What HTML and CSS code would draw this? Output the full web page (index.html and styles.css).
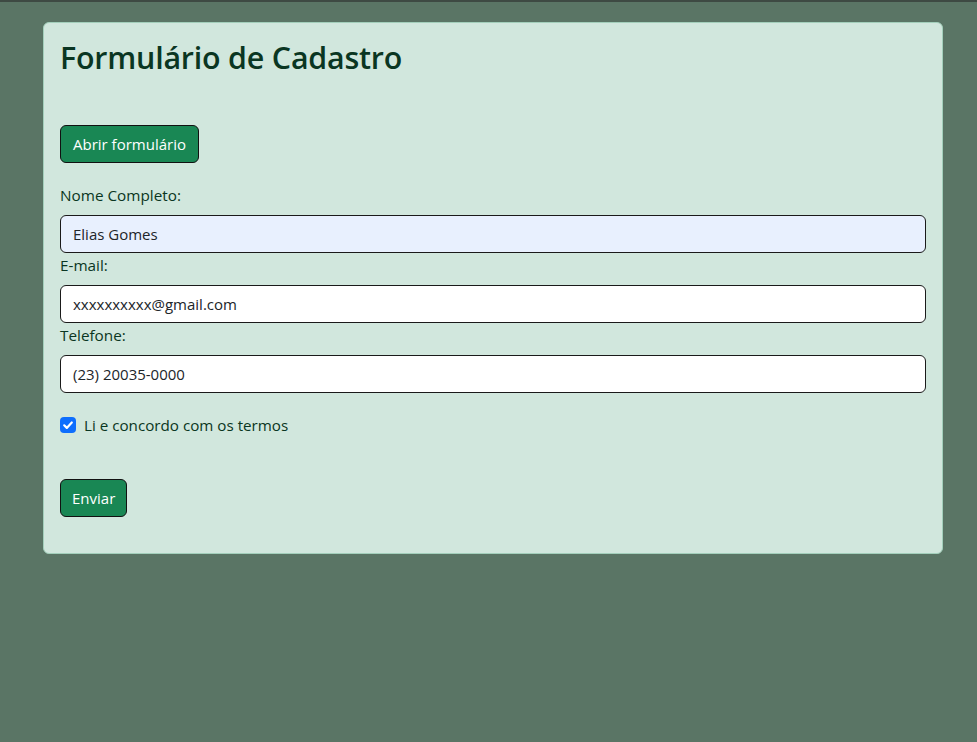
FILE: index.html
```html
<!DOCTYPE html>
<html lang="pt-BR">
<head>
<meta charset="utf-8">
<title>Formulário de Cadastro</title>
<link rel="stylesheet" href="styles.css">
</head>
<body>
<div class="topline"></div>
<main class="card">
  <h1 class="title">Formulário de Cadastro</h1>
  <button class="btn btn-open" type="button">Abrir formulário</button>
  <form class="form">
    <label class="label" for="nome">Nome Completo:</label>
    <input class="input input-autofill" id="nome" type="text" value="Elias Gomes">
    <label class="label" for="email">E-mail:</label>
    <input class="input" id="email" type="text" value="xxxxxxxxxx@gmail.com">
    <label class="label" for="tel">Telefone:</label>
    <input class="input" id="tel" type="text" value="(23) 20035-0000">
    <div class="check">
      <span class="check-box"><svg viewBox="0 0 16 16" width="16" height="16"><path d="M4.2 8.3l2.6 2.6 5-5.4" fill="none" stroke="#fff" stroke-width="2.2" stroke-linecap="round" stroke-linejoin="round"/></svg></span>
      <span class="check-label">Li e concordo com os termos</span>
    </div>
    <button class="btn btn-send" type="button">Enviar</button>
  </form>
</main>
</body>
</html>
```
FILE: styles.css
```css
* { box-sizing: border-box; }
html, body { margin: 0; padding: 0; }
body {
  background: #5a7565;
  font-family: "Open Sans", "Noto Sans", sans-serif;
  color: #0a3622;
  min-height: 742px;
}
.topline {
  height: 2px;
  background: #3e4a43;
}
.card {
  margin: 20px 0 0 43px;
  width: 900px;
  background: #d1e7dd;
  border: 1px solid #a3cfbb;
  border-radius: 6px;
  padding: 16px 16px 36px;
}
.title {
  margin: 0 0 48px;
  font-size: 30.4px;
  font-weight: 600;
  line-height: 38px;
  color: #0a3622;
  letter-spacing: -0.2px;
}
.btn {
  display: block;
  height: 38px;
  padding: 0 12px;
  background: #198754;
  color: #fff;
  border: 1px solid #111;
  border-radius: 6px;
  font-family: inherit;
  font-size: 15px;
  line-height: 36px;
}
.btn-send { padding: 0 11px; }
.form {
  display: flex;
  flex-direction: column;
  align-items: flex-start;
  margin-top: 20px;
}
.label {
  font-size: 15.3px;
  line-height: 24px;
  margin-bottom: 8px;
  color: #0a3622;
}
.input {
  width: 100%;
  height: 38px;
  padding: 0 12px;
  background: #fff;
  border: 1px solid #1a1a1a;
  border-radius: 6px;
  font-family: inherit;
  font-size: 15px;
  color: #212529;
  outline: none;
}
.input-autofill { background: #e8f0fe; }
.check {
  display: flex;
  align-items: center;
  gap: 8px;
  margin-top: 20px;
  height: 24px;
}
.check-box {
  width: 16px;
  height: 16px;
  border-radius: 4px;
  background: #0d6efd;
  display: flex;
}
.check-label {
  font-size: 15.2px;
  color: #0a3622;
}
.btn-send { margin-top: 42px; }
```
